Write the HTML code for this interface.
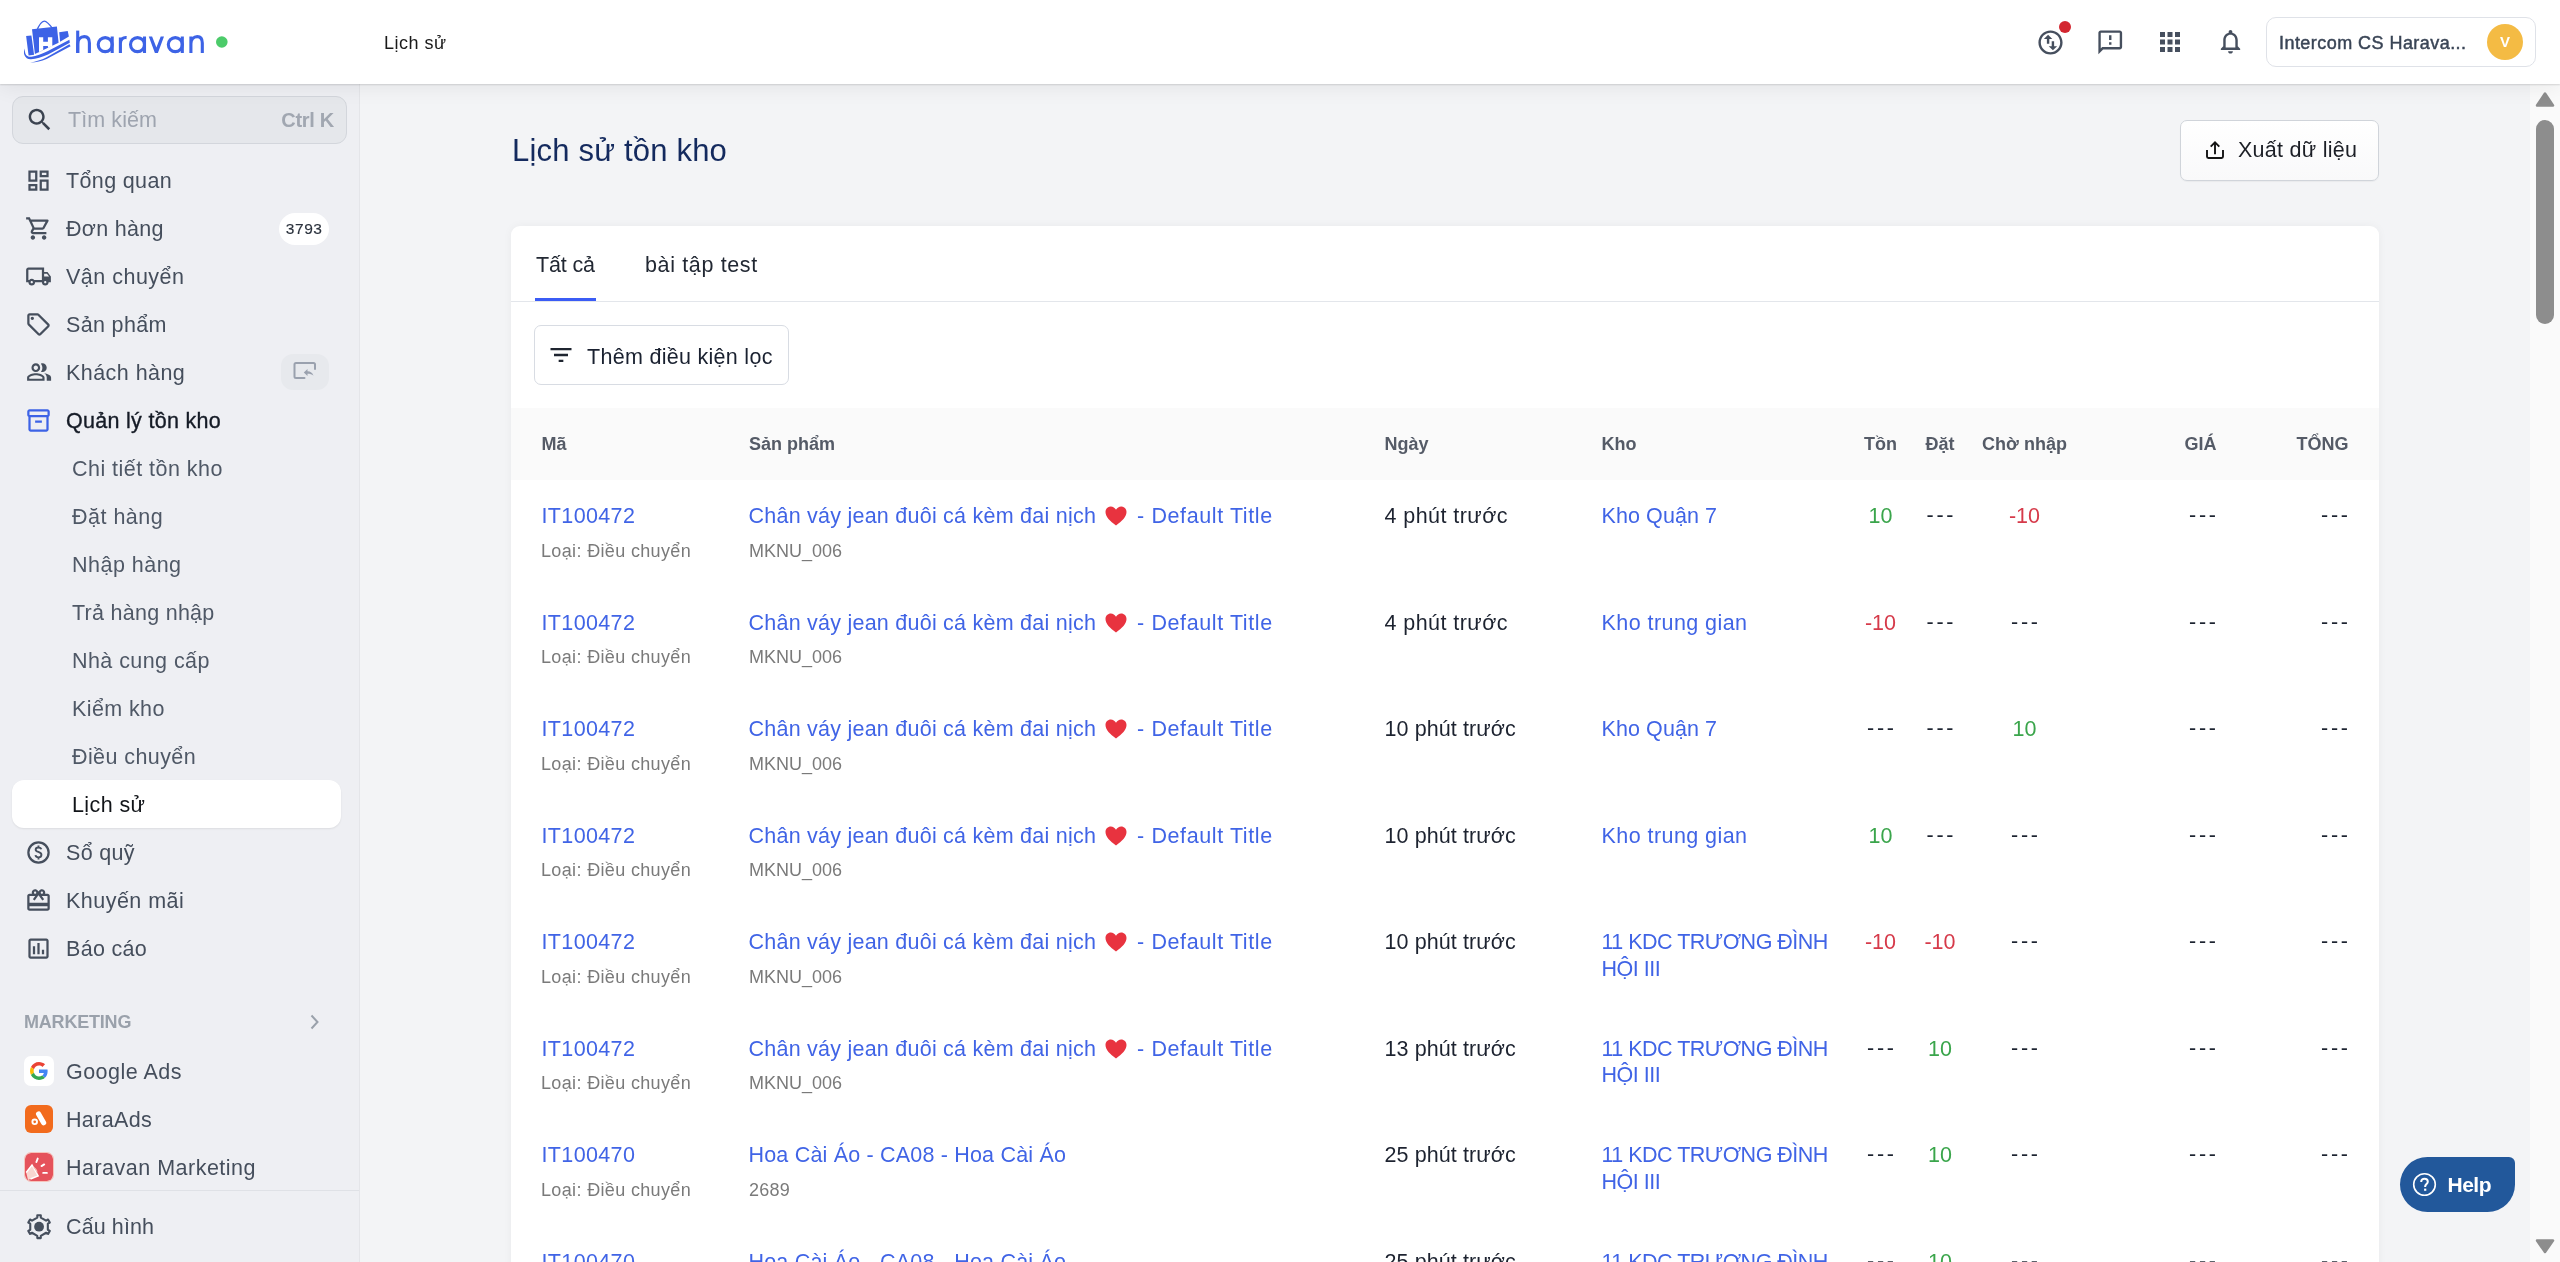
<!DOCTYPE html>
<html><head><meta charset="utf-8"><title>Lịch sử tồn kho</title>
<style>
*{box-sizing:border-box;margin:0;padding:0}
html,body{width:2560px;height:1262px;overflow:hidden;background:#f3f4f6;font-family:"Liberation Sans",sans-serif;position:relative}
.a{position:absolute;white-space:nowrap}
svg.a{overflow:visible}
#root{position:absolute;left:0;top:0;width:2560px;height:1262px;overflow:hidden;will-change:transform}</style></head><body><div id="root">
<div class="a" style="left:512px;top:128.36px;height:46px;line-height:46px;font-size:31px;color:#142a5e;letter-spacing:0.2px">Lịch sử tồn kho</div>
<div class="a" style="left:2180px;top:120px;width:199px;height:61px;border:1px solid #d0d4da;border-radius:7px;background:linear-gradient(#fff,#f9f9fa);box-shadow:0 1px 1px rgba(0,0,0,0.04)"></div>
<svg class="a" style="left:2200px;top:135px" width="30" height="30" viewBox="0 0 30 30"><g fill="none" stroke="#141414" stroke-width="1.9" stroke-linecap="butt"><path d="M15 7.2 V19.3"/><path d="M10.7 11.6 L15 7.3 L19.3 11.6"/><path d="M7 15 V21.6 Q7 23 8.4 23 H21.6 Q23 23 23 21.6 V15"/></g></svg>
<div class="a" style="left:2238px;top:132.75px;height:34px;line-height:34px;font-size:21.5px;color:#1c1f26;letter-spacing:0.27px">Xuất dữ liệu</div>
<div class="a" style="left:511px;top:226px;width:1868px;height:1100px;background:#fff;border-radius:9px;box-shadow:0 0 10px rgba(0,0,0,0.045)"></div>
<div class="a" style="left:536px;top:247.55px;height:34px;line-height:34px;font-size:21.5px;color:#222833;letter-spacing:-0.16px">Tất cả</div>
<div class="a" style="left:645px;top:247.55px;height:34px;line-height:34px;font-size:21.5px;color:#222833;letter-spacing:0.64px">bài tập test</div>
<div class="a" style="left:511px;top:301px;width:1868px;height:1px;background:#e3e6eb"></div>
<div class="a" style="left:535px;top:298px;width:61px;height:3px;background:#3b5cf5"></div>
<div class="a" style="left:534px;top:325px;width:255px;height:60px;border:1px solid #d8dce3;border-radius:7px;background:#fff"></div>
<svg class="a" style="left:546.5px;top:341px;" width="28" height="28" viewBox="0 0 24 24"><path fill="#1f2530" d="M10 18h4v-2h-4v2zM3 6v2h18V6H3zm3 7h12v-2H6v2z"/></svg>
<div class="a" style="left:587px;top:339.55px;height:34px;line-height:34px;font-size:21.5px;color:#1a2130;letter-spacing:0.29px">Thêm điều kiện lọc</div>
<div class="a" style="left:511px;top:408px;width:1868px;height:72px;background:#fafafa"></div>
<div class="a" style="left:541.5px;top:429.71px;height:28px;line-height:28px;font-size:18px;color:#555b67;font-weight:700">Mã</div>
<div class="a" style="left:749px;top:429.71px;height:28px;line-height:28px;font-size:18px;color:#555b67;font-weight:700">Sản phẩm</div>
<div class="a" style="left:1384.5px;top:429.71px;height:28px;line-height:28px;font-size:18px;color:#555b67;font-weight:700">Ngày</div>
<div class="a" style="left:1601.5px;top:429.71px;height:28px;line-height:28px;font-size:18px;color:#555b67;font-weight:700">Kho</div>
<div class="a" style="left:1850.5px;width:60px;top:429.71px;height:28px;line-height:28px;font-size:18px;color:#555b67;text-align:center;font-weight:700">Tồn</div>
<div class="a" style="left:1910.0px;width:60px;top:429.71px;height:28px;line-height:28px;font-size:18px;color:#555b67;text-align:center;font-weight:700">Đặt</div>
<div class="a" style="left:1969.5px;width:110px;top:429.71px;height:28px;line-height:28px;font-size:18px;color:#555b67;text-align:center;font-weight:700">Chờ nhập</div>
<div class="a" style="right:343.5px;top:429.71px;height:28px;line-height:28px;font-size:18px;color:#555b67;text-align:right;font-weight:700">GIÁ</div>
<div class="a" style="right:211.5px;top:429.71px;height:28px;line-height:28px;font-size:18px;color:#555b67;text-align:right;font-weight:700">TỔNG</div>
<div class="a" style="left:541.5px;top:499.25px;height:34px;line-height:34px;font-size:21.5px;color:#4064e6;letter-spacing:0.36px">IT100472</div>
<div class="a" style="left:541px;top:536.71px;height:28px;line-height:28px;font-size:18px;color:#7a7a7a;letter-spacing:0.35px">Loại: Điều chuyển</div>
<div class="a" style="left:748.5px;top:499.25px;height:34px;line-height:34px;font-size:21.5px;color:#4064e6;letter-spacing:0.24px">Chân váy jean đuôi cá kèm đai nịch<svg style="display:inline-block;vertical-align:-3px;margin:0 10px 0 9px" width="22" height="20" viewBox="0 0 22 20"><path d="M11 19.5 C5 15 0.5 11 0.5 6 C0.5 2.8 2.9 0.5 5.8 0.5 C8 0.5 9.9 1.8 11 3.8 C12.1 1.8 14 0.5 16.2 0.5 C19.1 0.5 21.5 2.8 21.5 6 C21.5 11 17 15 11 19.5 Z" fill="#e8333f"/></svg><span style="letter-spacing:0.6px">- Default Title</span></div>
<div class="a" style="left:749px;top:536.71px;height:28px;line-height:28px;font-size:18px;color:#7a7a7a">MKNU_006</div>
<div class="a" style="left:1384.5px;top:499.25px;height:34px;line-height:34px;font-size:21.5px;color:#1d2330;letter-spacing:0.44px">4 phút trước</div>
<div class="a" style="left:1601.5px;top:499.25px;height:34px;line-height:34px;font-size:21.5px;color:#4064e6;letter-spacing:0.09px">Kho Quận 7</div>
<div class="a" style="left:1850.5px;width:60px;top:499.25px;height:34px;line-height:34px;font-size:21.5px;color:#3aa54b;text-align:center;letter-spacing:0.04px">10</div>
<div class="a" style="left:1911.4px;width:60px;top:498.35px;height:34px;line-height:34px;font-size:21.5px;color:#1d2330;text-align:center;letter-spacing:2.8px">---</div>
<div class="a" style="left:1974.5px;width:100px;top:499.25px;height:34px;line-height:34px;font-size:21.5px;color:#d63a4a;text-align:center;letter-spacing:0.04px">-10</div>
<div class="a" style="right:341.1999999999998px;top:498.35px;height:34px;line-height:34px;font-size:21.5px;color:#1d2330;text-align:right;letter-spacing:2.8px">---</div>
<div class="a" style="right:209.19999999999982px;top:498.35px;height:34px;line-height:34px;font-size:21.5px;color:#1d2330;text-align:right;letter-spacing:2.8px">---</div>
<div class="a" style="left:541.5px;top:605.75px;height:34px;line-height:34px;font-size:21.5px;color:#4064e6;letter-spacing:0.36px">IT100472</div>
<div class="a" style="left:541px;top:643.21px;height:28px;line-height:28px;font-size:18px;color:#7a7a7a;letter-spacing:0.35px">Loại: Điều chuyển</div>
<div class="a" style="left:748.5px;top:605.75px;height:34px;line-height:34px;font-size:21.5px;color:#4064e6;letter-spacing:0.24px">Chân váy jean đuôi cá kèm đai nịch<svg style="display:inline-block;vertical-align:-3px;margin:0 10px 0 9px" width="22" height="20" viewBox="0 0 22 20"><path d="M11 19.5 C5 15 0.5 11 0.5 6 C0.5 2.8 2.9 0.5 5.8 0.5 C8 0.5 9.9 1.8 11 3.8 C12.1 1.8 14 0.5 16.2 0.5 C19.1 0.5 21.5 2.8 21.5 6 C21.5 11 17 15 11 19.5 Z" fill="#e8333f"/></svg><span style="letter-spacing:0.6px">- Default Title</span></div>
<div class="a" style="left:749px;top:643.21px;height:28px;line-height:28px;font-size:18px;color:#7a7a7a">MKNU_006</div>
<div class="a" style="left:1384.5px;top:605.75px;height:34px;line-height:34px;font-size:21.5px;color:#1d2330;letter-spacing:0.44px">4 phút trước</div>
<div class="a" style="left:1601.5px;top:605.75px;height:34px;line-height:34px;font-size:21.5px;color:#4064e6;letter-spacing:0.44px">Kho trung gian</div>
<div class="a" style="left:1850.5px;width:60px;top:605.75px;height:34px;line-height:34px;font-size:21.5px;color:#d63a4a;text-align:center;letter-spacing:0.04px">-10</div>
<div class="a" style="left:1911.4px;width:60px;top:604.85px;height:34px;line-height:34px;font-size:21.5px;color:#1d2330;text-align:center;letter-spacing:2.8px">---</div>
<div class="a" style="left:1975.9px;width:100px;top:604.85px;height:34px;line-height:34px;font-size:21.5px;color:#1d2330;text-align:center;letter-spacing:2.8px">---</div>
<div class="a" style="right:341.1999999999998px;top:604.85px;height:34px;line-height:34px;font-size:21.5px;color:#1d2330;text-align:right;letter-spacing:2.8px">---</div>
<div class="a" style="right:209.19999999999982px;top:604.85px;height:34px;line-height:34px;font-size:21.5px;color:#1d2330;text-align:right;letter-spacing:2.8px">---</div>
<div class="a" style="left:541.5px;top:712.25px;height:34px;line-height:34px;font-size:21.5px;color:#4064e6;letter-spacing:0.36px">IT100472</div>
<div class="a" style="left:541px;top:749.71px;height:28px;line-height:28px;font-size:18px;color:#7a7a7a;letter-spacing:0.35px">Loại: Điều chuyển</div>
<div class="a" style="left:748.5px;top:712.25px;height:34px;line-height:34px;font-size:21.5px;color:#4064e6;letter-spacing:0.24px">Chân váy jean đuôi cá kèm đai nịch<svg style="display:inline-block;vertical-align:-3px;margin:0 10px 0 9px" width="22" height="20" viewBox="0 0 22 20"><path d="M11 19.5 C5 15 0.5 11 0.5 6 C0.5 2.8 2.9 0.5 5.8 0.5 C8 0.5 9.9 1.8 11 3.8 C12.1 1.8 14 0.5 16.2 0.5 C19.1 0.5 21.5 2.8 21.5 6 C21.5 11 17 15 11 19.5 Z" fill="#e8333f"/></svg><span style="letter-spacing:0.6px">- Default Title</span></div>
<div class="a" style="left:749px;top:749.71px;height:28px;line-height:28px;font-size:18px;color:#7a7a7a">MKNU_006</div>
<div class="a" style="left:1384.5px;top:712.25px;height:34px;line-height:34px;font-size:21.5px;color:#1d2330;letter-spacing:0.09px">10 phút trước</div>
<div class="a" style="left:1601.5px;top:712.25px;height:34px;line-height:34px;font-size:21.5px;color:#4064e6;letter-spacing:0.09px">Kho Quận 7</div>
<div class="a" style="left:1851.9px;width:60px;top:711.35px;height:34px;line-height:34px;font-size:21.5px;color:#1d2330;text-align:center;letter-spacing:2.8px">---</div>
<div class="a" style="left:1911.4px;width:60px;top:711.35px;height:34px;line-height:34px;font-size:21.5px;color:#1d2330;text-align:center;letter-spacing:2.8px">---</div>
<div class="a" style="left:1974.5px;width:100px;top:712.25px;height:34px;line-height:34px;font-size:21.5px;color:#3aa54b;text-align:center;letter-spacing:0.04px">10</div>
<div class="a" style="right:341.1999999999998px;top:711.35px;height:34px;line-height:34px;font-size:21.5px;color:#1d2330;text-align:right;letter-spacing:2.8px">---</div>
<div class="a" style="right:209.19999999999982px;top:711.35px;height:34px;line-height:34px;font-size:21.5px;color:#1d2330;text-align:right;letter-spacing:2.8px">---</div>
<div class="a" style="left:541.5px;top:818.75px;height:34px;line-height:34px;font-size:21.5px;color:#4064e6;letter-spacing:0.36px">IT100472</div>
<div class="a" style="left:541px;top:856.21px;height:28px;line-height:28px;font-size:18px;color:#7a7a7a;letter-spacing:0.35px">Loại: Điều chuyển</div>
<div class="a" style="left:748.5px;top:818.75px;height:34px;line-height:34px;font-size:21.5px;color:#4064e6;letter-spacing:0.24px">Chân váy jean đuôi cá kèm đai nịch<svg style="display:inline-block;vertical-align:-3px;margin:0 10px 0 9px" width="22" height="20" viewBox="0 0 22 20"><path d="M11 19.5 C5 15 0.5 11 0.5 6 C0.5 2.8 2.9 0.5 5.8 0.5 C8 0.5 9.9 1.8 11 3.8 C12.1 1.8 14 0.5 16.2 0.5 C19.1 0.5 21.5 2.8 21.5 6 C21.5 11 17 15 11 19.5 Z" fill="#e8333f"/></svg><span style="letter-spacing:0.6px">- Default Title</span></div>
<div class="a" style="left:749px;top:856.21px;height:28px;line-height:28px;font-size:18px;color:#7a7a7a">MKNU_006</div>
<div class="a" style="left:1384.5px;top:818.75px;height:34px;line-height:34px;font-size:21.5px;color:#1d2330;letter-spacing:0.09px">10 phút trước</div>
<div class="a" style="left:1601.5px;top:818.75px;height:34px;line-height:34px;font-size:21.5px;color:#4064e6;letter-spacing:0.44px">Kho trung gian</div>
<div class="a" style="left:1850.5px;width:60px;top:818.75px;height:34px;line-height:34px;font-size:21.5px;color:#3aa54b;text-align:center;letter-spacing:0.04px">10</div>
<div class="a" style="left:1911.4px;width:60px;top:817.85px;height:34px;line-height:34px;font-size:21.5px;color:#1d2330;text-align:center;letter-spacing:2.8px">---</div>
<div class="a" style="left:1975.9px;width:100px;top:817.85px;height:34px;line-height:34px;font-size:21.5px;color:#1d2330;text-align:center;letter-spacing:2.8px">---</div>
<div class="a" style="right:341.1999999999998px;top:817.85px;height:34px;line-height:34px;font-size:21.5px;color:#1d2330;text-align:right;letter-spacing:2.8px">---</div>
<div class="a" style="right:209.19999999999982px;top:817.85px;height:34px;line-height:34px;font-size:21.5px;color:#1d2330;text-align:right;letter-spacing:2.8px">---</div>
<div class="a" style="left:541.5px;top:925.25px;height:34px;line-height:34px;font-size:21.5px;color:#4064e6;letter-spacing:0.36px">IT100472</div>
<div class="a" style="left:541px;top:962.71px;height:28px;line-height:28px;font-size:18px;color:#7a7a7a;letter-spacing:0.35px">Loại: Điều chuyển</div>
<div class="a" style="left:748.5px;top:925.25px;height:34px;line-height:34px;font-size:21.5px;color:#4064e6;letter-spacing:0.24px">Chân váy jean đuôi cá kèm đai nịch<svg style="display:inline-block;vertical-align:-3px;margin:0 10px 0 9px" width="22" height="20" viewBox="0 0 22 20"><path d="M11 19.5 C5 15 0.5 11 0.5 6 C0.5 2.8 2.9 0.5 5.8 0.5 C8 0.5 9.9 1.8 11 3.8 C12.1 1.8 14 0.5 16.2 0.5 C19.1 0.5 21.5 2.8 21.5 6 C21.5 11 17 15 11 19.5 Z" fill="#e8333f"/></svg><span style="letter-spacing:0.6px">- Default Title</span></div>
<div class="a" style="left:749px;top:962.71px;height:28px;line-height:28px;font-size:18px;color:#7a7a7a">MKNU_006</div>
<div class="a" style="left:1384.5px;top:925.25px;height:34px;line-height:34px;font-size:21.5px;color:#1d2330;letter-spacing:0.09px">10 phút trước</div>
<div class="a" style="left:1601.5px;top:925.25px;height:34px;line-height:34px;font-size:21.5px;color:#4064e6;letter-spacing:-0.51px">11 KDC TRƯƠNG ĐÌNH</div>
<div class="a" style="left:1601.5px;top:951.85px;height:34px;line-height:34px;font-size:21.5px;color:#4064e6;letter-spacing:-0.48px">HỘI III</div>
<div class="a" style="left:1850.5px;width:60px;top:925.25px;height:34px;line-height:34px;font-size:21.5px;color:#d63a4a;text-align:center;letter-spacing:0.04px">-10</div>
<div class="a" style="left:1910.0px;width:60px;top:925.25px;height:34px;line-height:34px;font-size:21.5px;color:#d63a4a;text-align:center;letter-spacing:0.04px">-10</div>
<div class="a" style="left:1975.9px;width:100px;top:924.35px;height:34px;line-height:34px;font-size:21.5px;color:#1d2330;text-align:center;letter-spacing:2.8px">---</div>
<div class="a" style="right:341.1999999999998px;top:924.35px;height:34px;line-height:34px;font-size:21.5px;color:#1d2330;text-align:right;letter-spacing:2.8px">---</div>
<div class="a" style="right:209.19999999999982px;top:924.35px;height:34px;line-height:34px;font-size:21.5px;color:#1d2330;text-align:right;letter-spacing:2.8px">---</div>
<div class="a" style="left:541.5px;top:1031.75px;height:34px;line-height:34px;font-size:21.5px;color:#4064e6;letter-spacing:0.36px">IT100472</div>
<div class="a" style="left:541px;top:1069.21px;height:28px;line-height:28px;font-size:18px;color:#7a7a7a;letter-spacing:0.35px">Loại: Điều chuyển</div>
<div class="a" style="left:748.5px;top:1031.75px;height:34px;line-height:34px;font-size:21.5px;color:#4064e6;letter-spacing:0.24px">Chân váy jean đuôi cá kèm đai nịch<svg style="display:inline-block;vertical-align:-3px;margin:0 10px 0 9px" width="22" height="20" viewBox="0 0 22 20"><path d="M11 19.5 C5 15 0.5 11 0.5 6 C0.5 2.8 2.9 0.5 5.8 0.5 C8 0.5 9.9 1.8 11 3.8 C12.1 1.8 14 0.5 16.2 0.5 C19.1 0.5 21.5 2.8 21.5 6 C21.5 11 17 15 11 19.5 Z" fill="#e8333f"/></svg><span style="letter-spacing:0.6px">- Default Title</span></div>
<div class="a" style="left:749px;top:1069.21px;height:28px;line-height:28px;font-size:18px;color:#7a7a7a">MKNU_006</div>
<div class="a" style="left:1384.5px;top:1031.75px;height:34px;line-height:34px;font-size:21.5px;color:#1d2330;letter-spacing:0.09px">13 phút trước</div>
<div class="a" style="left:1601.5px;top:1031.75px;height:34px;line-height:34px;font-size:21.5px;color:#4064e6;letter-spacing:-0.51px">11 KDC TRƯƠNG ĐÌNH</div>
<div class="a" style="left:1601.5px;top:1058.35px;height:34px;line-height:34px;font-size:21.5px;color:#4064e6;letter-spacing:-0.48px">HỘI III</div>
<div class="a" style="left:1851.9px;width:60px;top:1030.85px;height:34px;line-height:34px;font-size:21.5px;color:#1d2330;text-align:center;letter-spacing:2.8px">---</div>
<div class="a" style="left:1910.0px;width:60px;top:1031.75px;height:34px;line-height:34px;font-size:21.5px;color:#3aa54b;text-align:center;letter-spacing:0.04px">10</div>
<div class="a" style="left:1975.9px;width:100px;top:1030.85px;height:34px;line-height:34px;font-size:21.5px;color:#1d2330;text-align:center;letter-spacing:2.8px">---</div>
<div class="a" style="right:341.1999999999998px;top:1030.85px;height:34px;line-height:34px;font-size:21.5px;color:#1d2330;text-align:right;letter-spacing:2.8px">---</div>
<div class="a" style="right:209.19999999999982px;top:1030.85px;height:34px;line-height:34px;font-size:21.5px;color:#1d2330;text-align:right;letter-spacing:2.8px">---</div>
<div class="a" style="left:541.5px;top:1138.25px;height:34px;line-height:34px;font-size:21.5px;color:#4064e6;letter-spacing:0.36px">IT100470</div>
<div class="a" style="left:541px;top:1175.71px;height:28px;line-height:28px;font-size:18px;color:#7a7a7a;letter-spacing:0.35px">Loại: Điều chuyển</div>
<div class="a" style="left:748.5px;top:1138.25px;height:34px;line-height:34px;font-size:21.5px;color:#4064e6;letter-spacing:0.19px">Hoa Cài Áo - CA08 - Hoa Cài Áo</div>
<div class="a" style="left:749px;top:1175.71px;height:28px;line-height:28px;font-size:18px;color:#7a7a7a;letter-spacing:0.2px">2689</div>
<div class="a" style="left:1384.5px;top:1138.25px;height:34px;line-height:34px;font-size:21.5px;color:#1d2330;letter-spacing:0.09px">25 phút trước</div>
<div class="a" style="left:1601.5px;top:1138.25px;height:34px;line-height:34px;font-size:21.5px;color:#4064e6;letter-spacing:-0.51px">11 KDC TRƯƠNG ĐÌNH</div>
<div class="a" style="left:1601.5px;top:1164.85px;height:34px;line-height:34px;font-size:21.5px;color:#4064e6;letter-spacing:-0.48px">HỘI III</div>
<div class="a" style="left:1851.9px;width:60px;top:1137.35px;height:34px;line-height:34px;font-size:21.5px;color:#1d2330;text-align:center;letter-spacing:2.8px">---</div>
<div class="a" style="left:1910.0px;width:60px;top:1138.25px;height:34px;line-height:34px;font-size:21.5px;color:#3aa54b;text-align:center;letter-spacing:0.04px">10</div>
<div class="a" style="left:1975.9px;width:100px;top:1137.35px;height:34px;line-height:34px;font-size:21.5px;color:#1d2330;text-align:center;letter-spacing:2.8px">---</div>
<div class="a" style="right:341.1999999999998px;top:1137.35px;height:34px;line-height:34px;font-size:21.5px;color:#1d2330;text-align:right;letter-spacing:2.8px">---</div>
<div class="a" style="right:209.19999999999982px;top:1137.35px;height:34px;line-height:34px;font-size:21.5px;color:#1d2330;text-align:right;letter-spacing:2.8px">---</div>
<div class="a" style="left:541.5px;top:1244.75px;height:34px;line-height:34px;font-size:21.5px;color:#4064e6;letter-spacing:0.36px">IT100470</div>
<div class="a" style="left:541px;top:1282.21px;height:28px;line-height:28px;font-size:18px;color:#7a7a7a;letter-spacing:0.35px">Loại: Điều chuyển</div>
<div class="a" style="left:748.5px;top:1244.75px;height:34px;line-height:34px;font-size:21.5px;color:#4064e6;letter-spacing:0.19px">Hoa Cài Áo - CA08 - Hoa Cài Áo</div>
<div class="a" style="left:749px;top:1282.21px;height:28px;line-height:28px;font-size:18px;color:#7a7a7a;letter-spacing:0.2px">2689</div>
<div class="a" style="left:1384.5px;top:1244.75px;height:34px;line-height:34px;font-size:21.5px;color:#1d2330;letter-spacing:0.09px">25 phút trước</div>
<div class="a" style="left:1601.5px;top:1244.75px;height:34px;line-height:34px;font-size:21.5px;color:#4064e6;letter-spacing:-0.51px">11 KDC TRƯƠNG ĐÌNH</div>
<div class="a" style="left:1601.5px;top:1271.35px;height:34px;line-height:34px;font-size:21.5px;color:#4064e6;letter-spacing:-0.48px">HỘI III</div>
<div class="a" style="left:1851.9px;width:60px;top:1243.85px;height:34px;line-height:34px;font-size:21.5px;color:#1d2330;text-align:center;letter-spacing:2.8px">---</div>
<div class="a" style="left:1910.0px;width:60px;top:1244.75px;height:34px;line-height:34px;font-size:21.5px;color:#3aa54b;text-align:center;letter-spacing:0.04px">10</div>
<div class="a" style="left:1975.9px;width:100px;top:1243.85px;height:34px;line-height:34px;font-size:21.5px;color:#1d2330;text-align:center;letter-spacing:2.8px">---</div>
<div class="a" style="right:341.1999999999998px;top:1243.85px;height:34px;line-height:34px;font-size:21.5px;color:#1d2330;text-align:right;letter-spacing:2.8px">---</div>
<div class="a" style="right:209.19999999999982px;top:1243.85px;height:34px;line-height:34px;font-size:21.5px;color:#1d2330;text-align:right;letter-spacing:2.8px">---</div>
<div class="a" style="left:0;top:84px;width:360px;height:1178px;background:#eeeff3;border-right:1px solid #e4e5e9"></div>
<div class="a" style="left:12px;top:96px;width:335px;height:48px;border:1px solid #d3d6dc;border-radius:11px;background:#e5e7eb"></div>
<svg class="a" style="left:25px;top:105px;" width="29.5" height="29.5" viewBox="0 0 24 24"><path fill="#3b4350" d="M15.5 14h-.79l-.28-.27C15.41 12.59 16 11.11 16 9.5 16 5.91 13.09 3 9.5 3S3 5.91 3 9.5 5.91 16 9.5 16c1.61 0 3.09-.59 4.23-1.57l.27.28v.79l5 4.99L20.49 19l-4.99-5zm-6 0C7.01 14 5 11.99 5 9.5S7.01 5 9.5 5 14 7.01 14 9.5 11.99 14 9.5 14z"/></svg>
<div class="a" style="left:68px;top:103.45px;height:34px;line-height:34px;font-size:21.5px;color:#9ea4af;letter-spacing:0.09px">Tìm kiếm</div>
<div class="a" style="right:2226px;top:104.23px;height:32px;line-height:32px;font-size:20px;color:#a1a7b1;text-align:right;font-weight:700;letter-spacing:-0.3px">Ctrl K</div>
<svg class="a" style="left:25px;top:166.5px;" width="27" height="27" viewBox="0 0 24 24"><path fill="#464f5d" d="M19 5v2h-4V5h4M9 5v6H5V5h4m10 8v6h-4v-6h4M9 17v2H5v-2h4M21 3h-8v6h8V3zM11 3H3v10h8V3zm10 8h-8v10h8V11zm-10 4H3v6h8v-6z"/></svg>
<div class="a" style="left:66px;top:164.05px;height:34px;line-height:34px;font-size:21.5px;color:#454e5c;letter-spacing:0.36px">Tổng quan</div>
<svg class="a" style="left:25px;top:214.5px;" width="27" height="27" viewBox="0 0 24 24"><path fill="#464f5d" d="M15.55 13c.75 0 1.41-.41 1.75-1.03l3.58-6.49c.37-.66-.11-1.48-.87-1.48H5.21l-.94-2H1v2h2l3.6 7.59-1.35 2.44C4.52 15.37 5.48 17 7 17h12v-2H7l1.1-2h7.45zM6.16 6h12.15l-2.76 5H8.53L6.16 6zM7 18c-1.1 0-1.99.9-1.99 2S5.9 22 7 22s2-.9 2-2-.9-2-2-2zm10 0c-1.1 0-1.99.9-1.99 2s.89 2 1.99 2 2-.9 2-2-.9-2-2-2z"/></svg>
<div class="a" style="left:66px;top:212.05px;height:34px;line-height:34px;font-size:21.5px;color:#454e5c;letter-spacing:0.29px">Đơn hàng</div>
<svg class="a" style="left:25px;top:262.5px;" width="27" height="27" viewBox="0 0 24 24"><path fill="#464f5d" d="M20 8h-3V4H3c-1.1 0-2 .9-2 2v11h2c0 1.66 1.34 3 3 3s3-1.34 3-3h6c0 1.66 1.34 3 3 3s3-1.34 3-3h2v-5l-3-4zm-.5 1.5l1.96 2.5H17V9.5h2.5zM6 18c-.55 0-1-.45-1-1s.45-1 1-1 1 .45 1 1-.45 1-1 1zm2.22-3c-.55-.61-1.330-1-2.22-1s-1.67.39-2.22 1H3V6h12v9H8.22zM18 18c-.55 0-1-.45-1-1s.45-1 1-1 1 .45 1 1-.45 1-1 1z"/></svg>
<div class="a" style="left:66px;top:260.05px;height:34px;line-height:34px;font-size:21.5px;color:#454e5c;letter-spacing:0.49px">Vận chuyển</div>
<svg class="a" style="left:25px;top:310.5px;" width="27" height="27" viewBox="0 0 24 24"><path fill="#464f5d" d="M21.41 11.41l-8.83-8.83c-.37-.37-.88-.58-1.41-.58H4c-1.1 0-2 .9-2 2v7.17c0 .53.21 1.04.59 1.41l8.83 8.83c.78.78 2.05.78 2.83 0l7.17-7.17c.78-.78.78-2.04-.01-2.83zM12.830 20L4 11.17V4h7.17L20 12.83 12.83 20zM6.5 5A1.5 1.5 0 1 0 6.5 8 1.5 1.5 0 1 0 6.5 5z"/></svg>
<div class="a" style="left:66px;top:308.05px;height:34px;line-height:34px;font-size:21.5px;color:#454e5c;letter-spacing:0.34px">Sản phẩm</div>
<svg class="a" style="left:25.9px;top:358.9px;" width="26.2" height="26.2" viewBox="0 0 24 24"><path fill="#464f5d" d="M16.67 13.13C18.04 14.06 19 15.32 19 17v3h4v-3c0-2.180-3.57-3.47-6.33-3.87zM15 12c2.21 0 4-1.79 4-4s-1.79-4-4-4c-.47 0-.91.1-1.330.24C14.5 5.27 15 6.58 15 8s-.5 2.73-1.33 3.76c.42.14.86.24 1.33.24zM9 12c2.21 0 4-1.79 4-4s-1.79-4-4-4-4 1.79-4 4 1.79 4 4 4zm0-6c1.1 0 2 .9 2 2s-.9 2-2 2-2-.9-2-2 .9-2 2-2zM9 13c-2.67 0-8 1.34-8 4v3h16v-3c0-2.66-5.33-4-8-4zm6 5H3v-.99C3.2 16.29 6.3 15 9 15s5.8 1.29 6 2v1z"/></svg>
<div class="a" style="left:66px;top:356.05px;height:34px;line-height:34px;font-size:21.5px;color:#454e5c;letter-spacing:0.45px">Khách hàng</div>
<svg class="a" style="left:25px;top:406.5px;" width="27" height="27" viewBox="0 0 24 24"><path fill="#3d63e6" d="M20 2H4c-1 0-2 .9-2 2v3.01c0 .72.43 1.34 1 1.69V20c0 1.1 1.1 2 2 2h14c.9 0 2-.9 2-2V8.7c.57-.35 1-.97 1-1.69V4c0-1.1-1-2-2-2zm-1 18H5V9h14v11zm1-13H4V4h16v3zM9 12h6v2H9z"/></svg>
<div class="a" style="left:66px;top:404.05px;height:34px;line-height:34px;font-size:21.5px;color:#151b26;letter-spacing:0.29px;-webkit-text-stroke:0.35px #151b26">Quản lý tồn kho</div>
<div class="a" style="left:279px;top:212.5px;width:50px;height:32px;border-radius:16px;background:#fff"></div>
<div class="a" style="left:279.2px;width:50px;top:216.68px;height:24px;line-height:24px;font-size:15.5px;color:#2a313c;text-align:center;letter-spacing:0.55px;-webkit-text-stroke:0.15px #2a313c">3793</div>
<div class="a" style="left:281px;top:354px;width:48px;height:36px;border-radius:12px;background:#e7e9ed"></div>
<svg class="a" style="left:281px;top:354px" width="48" height="36" viewBox="0 0 48 36"><path d="M23.5 24 H15 Q13.5 24 13.5 22.5 V10.5 Q13.5 9 15 9 H32.5 Q34 9 34 10.5 V15" fill="none" stroke="#9aa1ae" stroke-width="2" stroke-linecap="round"/><path d="M22.8 18.5 L26.5 15 V17.2 C29.5 17.2 31.5 18.8 32.5 21.8 C31 20.3 29 19.8 26.5 19.8 V22 Z" fill="#9aa1ae"/></svg>
<div class="a" style="left:72px;top:452.05px;height:34px;line-height:34px;font-size:21.5px;color:#4f5866;letter-spacing:0.47px">Chi tiết tồn kho</div>
<div class="a" style="left:72px;top:500.05px;height:34px;line-height:34px;font-size:21.5px;color:#4f5866;letter-spacing:0.49px">Đặt hàng</div>
<div class="a" style="left:72px;top:548.05px;height:34px;line-height:34px;font-size:21.5px;color:#4f5866;letter-spacing:0.48px">Nhập hàng</div>
<div class="a" style="left:72px;top:596.05px;height:34px;line-height:34px;font-size:21.5px;color:#4f5866;letter-spacing:0.27px">Trả hàng nhập</div>
<div class="a" style="left:72px;top:644.05px;height:34px;line-height:34px;font-size:21.5px;color:#4f5866;letter-spacing:0.43px">Nhà cung cấp</div>
<div class="a" style="left:72px;top:692.05px;height:34px;line-height:34px;font-size:21.5px;color:#4f5866;letter-spacing:0.39px">Kiểm kho</div>
<div class="a" style="left:72px;top:740.05px;height:34px;line-height:34px;font-size:21.5px;color:#4f5866;letter-spacing:0.41px">Điều chuyển</div>
<div class="a" style="left:12px;top:780px;width:329px;height:48px;border-radius:12px;background:#fff;box-shadow:0 1px 2px rgba(0,0,0,0.08)"></div>
<div class="a" style="left:72px;top:788.05px;height:34px;line-height:34px;font-size:21.5px;color:#111418;letter-spacing:0.4px">Lịch sử</div>
<svg class="a" style="left:25px;top:838.5px" width="27" height="27" viewBox="0 0 24 24"><circle cx="12" cy="12" r="9" fill="none" stroke="#464f5d" stroke-width="2"/><path d="M14.6 9.2 C14.3 8.2 13.4 7.5 12 7.5 C10.5 7.5 9.5 8.3 9.5 9.5 C9.5 12 14.6 11 14.6 14 C14.6 15.3 13.5 16.3 12 16.3 C10.4 16.3 9.5 15.5 9.3 14.4 M12 5.8 V7.5 M12 16.3 V18.2" fill="none" stroke="#464f5d" stroke-width="1.7"/></svg>
<div class="a" style="left:66px;top:836.05px;height:34px;line-height:34px;font-size:21.5px;color:#454e5c;letter-spacing:0.29px">Sổ quỹ</div>
<svg class="a" style="left:25px;top:886.5px;" width="27" height="27" viewBox="0 0 24 24"><path fill="#464f5d" d="M20 6h-2.18c.11-.31.18-.65.18-1 0-1.66-1.34-3-3-3-1.05 0-1.96.54-2.5 1.35l-.5.67-.5-.68C10.96 2.54 10.05 2 9 2 7.34 2 6 3.34 6 5c0 .35.07.69.18 1H4c-1.11 0-1.99.89-1.99 2L2 19c0 1.11.89 2 2 2h16c1.11 0 2-.89 2-2V8c0-1.11-.89-2-2-2zm-5-2c.55 0 1 .45 1 1s-.45 1-1 1-1-.45-1-1 .45-1 1-1zM9 4c.55 0 1 .45 1 1s-.45 1-1 1-1-.45-1-1 .45-1 1-1zm11 15H4v-2h16v2zm0-5H4V8h5.08L7 10.83 8.62 12 11 8.76l1-1.36 1 1.36L15.38 12 17 10.83 14.92 8H20v6z"/></svg>
<div class="a" style="left:66px;top:884.05px;height:34px;line-height:34px;font-size:21.5px;color:#454e5c;letter-spacing:0.47px">Khuyến mãi</div>
<svg class="a" style="left:25px;top:934.5px;" width="27" height="27" viewBox="0 0 24 24"><path fill="#464f5d" d="M9 17H7v-7h2v7zm4 0h-2V7h2v10zm4 0h-2v-4h2v4zm2 2H5V5h14v14zm0-16H5c-1.1 0-2 .9-2 2v14c0 1.1.9 2 2 2h14c1.1 0 2-.9 2-2V5c0-1.1-.9-2-2-2z"/></svg>
<div class="a" style="left:66px;top:932.05px;height:34px;line-height:34px;font-size:21.5px;color:#454e5c;letter-spacing:0.32px">Báo cáo</div>
<div class="a" style="left:24px;top:1007.81px;height:28px;line-height:28px;font-size:18px;color:#9aa1ab;font-weight:700;letter-spacing:-0.2px">MARKETING</div>
<svg class="a" style="left:305px;top:1012px" width="20" height="20" viewBox="0 0 20 20"><path d="M6.5 3.5 L12.5 10 L6.5 16.5" fill="none" stroke="#9aa1ab" stroke-width="2"/></svg>
<div class="a" style="left:24px;top:1056px;width:30px;height:30px;border-radius:7px;background:#fff"></div>
<svg class="a" style="left:30px;top:1062px" width="18" height="18" viewBox="0 0 48 48"><path fill="#EA4335" d="M24 9.5c3.54 0 6.71 1.22 9.21 3.6l6.85-6.85C35.9 2.38 30.47 0 24 0 14.62 0 6.51 5.38 2.56 13.22l7.98 6.19C12.43 13.72 17.74 9.5 24 9.5z"/><path fill="#4285F4" d="M46.98 24.55c0-1.57-.15-3.09-.38-4.55H24v9.02h12.94c-.58 2.96-2.26 5.48-4.78 7.18l7.73 6c4.51-4.18 7.09-10.36 7.09-17.65z"/><path fill="#FBBC05" d="M10.53 28.59c-.48-1.45-.76-2.99-.76-4.59s.27-3.14.76-4.59l-7.98-6.19C.92 16.46 0 20.12 0 24c0 3.88.92 7.54 2.56 10.78l7.97-6.19z"/><path fill="#34A853" d="M24 48c6.48 0 11.93-2.13 15.89-5.81l-7.73-6c-2.15 1.45-4.92 2.3-8.16 2.3-6.26 0-11.57-4.22-13.47-9.91l-7.98 6.19C6.51 42.62 14.62 48 24 48z"/></svg>
<div class="a" style="left:66px;top:1055.05px;height:34px;line-height:34px;font-size:21.5px;color:#454e5c;letter-spacing:0.47px">Google Ads</div>
<div class="a" style="left:25px;top:1105px;width:28px;height:28px;border-radius:6px;background:#f26b1d"></div>
<svg class="a" style="left:25px;top:1105px" width="28" height="28" viewBox="0 0 28 28"><path d="M13.6 9 L18.6 17.8" stroke="#fff" stroke-width="5.2" stroke-linecap="round"/><circle cx="9.7" cy="16.8" r="2.3" fill="none" stroke="#fff" stroke-width="1.9"/></svg>
<div class="a" style="left:66px;top:1103.05px;height:34px;line-height:34px;font-size:21.5px;color:#454e5c;letter-spacing:0.34px">HaraAds</div>
<div class="a" style="left:24px;top:1152px;width:30px;height:30px;border-radius:7px;background:#e5525b;background-clip:padding-box;border:1.8px solid #f6c3bb"></div>
<svg class="a" style="left:24px;top:1152px" width="30" height="30" viewBox="0 0 30 30"><path d="M2.2 20.5 L8 13 L14.2 24 L6.5 27 L4 28 Z" fill="#f8d6d0"/><path d="M2.2 20.5 L8 13 L14.2 24 L6.5 27" fill="none" stroke="#fff" stroke-width="1.4"/><path d="M9.6 15.5 C11.5 16.5 12.8 18.5 13 20.5" fill="none" stroke="#f6c3bb" stroke-width="1.2"/><path d="M13.7 6.6 L12.4 10 M20.2 12.4 L17.5 14.1 M19.2 20.9 L22.9 20.9" stroke="#fff" stroke-width="1.9" stroke-linecap="round"/></svg>
<div class="a" style="left:66px;top:1151.05px;height:34px;line-height:34px;font-size:21.5px;color:#454e5c;letter-spacing:0.49px">Haravan Marketing</div>
<div class="a" style="left:0;top:1190px;width:359px;height:1px;background:#dfe1e6"></div>
<svg class="a" style="left:20px;top:1206px" width="40" height="40" viewBox="0 0 40 40"><path d="M20.80 11.57 L20.80 9.28 L17.30 9.28 L17.30 11.57 L12.01 14.62 L10.04 13.48 L8.29 16.51 L10.26 17.65 L10.26 23.75 L8.29 24.89 L10.04 27.92 L12.01 26.78 L17.30 29.83 L17.30 32.12 L20.80 32.12 L20.80 29.83 L26.09 26.78 L28.06 27.92 L29.81 24.89 L27.84 23.75 L27.84 17.65 L29.81 16.51 L28.06 13.48 L26.09 14.62 Z" fill="none" stroke="#464f5d" stroke-width="2.1" stroke-linejoin="round"/><circle cx="19.05" cy="20.70" r="4.9" fill="#464f5d"/></svg>
<div class="a" style="left:66px;top:1210.05px;height:34px;line-height:34px;font-size:21.5px;color:#454e5c;letter-spacing:0.11px">Cấu hình</div>
<div class="a" style="left:0;top:0;width:2560px;height:84px;background:#fff;box-shadow:0 1px 1.5px rgba(0,0,0,0.13),0 3px 20px rgba(0,0,0,0.07);z-index:5"></div>
<svg class="a" style="left:0;top:0;z-index:6" width="260" height="84" viewBox="0 0 260 84">
<g fill="#3d63e6">
<path d="M26.1 36.1 L31.4 35.5 L34.1 54.7 L28.6 55.6 Z"/>
<path d="M32 29.2 L56.9 26.6 L58.6 42.8 L34.9 54.1 Z M39 37.2 V52.15 L43.2 50.15 V46.1 H47.9 V47.9 L52.3 45.8 V37.2 H47.9 V41.8 H43.2 V37.2 Z"/>
<path d="M59.2 32.3 L67.7 31.1 L68.9 36.6 L60.1 41.8 Z"/>
<path d="M24.9 48.4 C24 51 23.6 53 24.4 55 C25.5 58 28 59.4 31 59.2 C36 59 42 57 48 54.5 L69.8 42.7 L69.4 39.7 L48 51 C42 54 36 56.3 31.5 56.8 C28.5 57.1 26.5 56 25.6 54 C25 52.5 24.9 50.5 24.9 48.4 Z"/>
<path d="M30.3 62.5 C36 62.6 41 61.2 46.6 59.1 L70.6 46.3 L69.4 44.2 L46.6 57.2 C41 60 36 61.6 30.3 62.5 Z"/>
</g>
<path d="M36.3 31.7 C39 25 41.5 21.2 44.3 21.2 C47 21.2 50 25 53.5 29.6" fill="none" stroke="#3d63e6" stroke-width="1.3"/>
<g fill="none" stroke="#3d63e6" stroke-width="3.1">
<path d="M77.7 30.6 V53"/>
<path d="M77.7 53 V44 C77.7 39.5 80.5 36.6 84.3 36.6 C88 36.6 89.4 39.5 89.4 43 V53"/>
<circle cx="105.2" cy="44.6" r="7"/>
<path d="M112.2 36.5 V53"/>
<path d="M120.4 53 V37.5 M120.4 43.5 C120.4 39 123 37.3 126.6 37.6"/>
<circle cx="137.5" cy="44.6" r="7"/>
<path d="M144.5 36.5 V53"/>

<circle cx="175.3" cy="44.6" r="7"/>
<path d="M182.3 36.5 V53"/>
<path d="M190.9 36.5 V53 M190.9 44 C190.9 39.5 193.7 36.6 197.3 36.6 C201 36.6 202.3 39.5 202.3 43 V53"/>
</g>
<path d="M148.8 36.6 H152.1 L156.4 47.6 L160.7 36.6 H164 L157.9 53 H154.9 Z" fill="#3d63e6"/>
<circle cx="221.8" cy="42" r="5.8" fill="#4ccb6a"/>
</svg>
<div class="a" style="left:384px;top:29.11px;height:28px;line-height:28px;font-size:18px;color:#1a1a1a;letter-spacing:0.5px;z-index:6">Lịch sử</div>
<svg class="a" style="left:2035.5px;top:27.5px;z-index:6" width="29" height="29" viewBox="0 0 24 24"><path fill="#464f5e" d="M12 2C6.48 2 2 6.48 2 12s4.48 10 10 10 10-4.48 10-10S17.52 2 12 2zm0 18c-4.41 0-8-3.59-8-8s3.59-8 8-8 8 3.59 8 8-3.59 8-8 8zM6.5 9L10 5.5 13.5 9H11v4H9V9H6.5zm11 6L14 18.5 10.5 15H13v-4h2v4h2.5z"/></svg>
<div class="a" style="left:2059px;top:21px;width:12px;height:12px;border-radius:50%;background:#d32630;z-index:6"></div>
<svg class="a" style="left:2096px;top:27.5px;z-index:6" width="28.5" height="28.5" viewBox="0 0 24 24"><path fill="#464f5e" d="M20 2H4c-1.1 0-1.99.9-1.99 2L2 22l4-4h14c1.1 0 2-.9 2-2V4c0-1.1-.9-2-2-2zm0 14H5.17l-.59.59-.58.58V4h16v12zm-9-4h2v2h-2zm0-6h2v4h-2z"/></svg>
<svg class="a" style="left:2155px;top:27px;z-index:6" width="30" height="30" viewBox="0 0 24 24"><path fill="#464f5e" d="M4 8h4V4H4v4zm6 12h4v-4h-4v4zm-6 0h4v-4H4v4zm0-6h4v-4H4v4zm6 0h4v-4h-4v4zm6-10v4h4V4h-4zm-6 4h4V4h-4v4zm6 6h4v-4h-4v4zm0 6h4v-4h-4v4z"/></svg>
<svg class="a" style="left:2215.5px;top:27px;z-index:6" width="29" height="29" viewBox="0 0 24 24"><path fill="#464f5e" d="M12 22c1.1 0 2-.9 2-2h-4c0 1.1.89 2 2 2zm6-6v-5c0-3.07-1.64-5.64-4.5-6.32V4c0-.83-.67-1.5-1.5-1.5s-1.5.67-1.5 1.5v.68C7.63 5.36 6 7.92 6 11v5l-2 2v1h16v-1l-2-2zm-2 1H8v-6c0-2.48 1.51-4.5 4-4.5s4 2.02 4 4.5v6z"/></svg>
<div class="a" style="left:2266px;top:17px;width:270px;height:50px;border:1.5px solid #dfe2e8;border-radius:10px;background:#fff;z-index:6"></div>
<div class="a" style="left:2279px;top:28.71px;height:28px;line-height:28px;font-size:18px;color:#3a4556;letter-spacing:0.45px;z-index:7;-webkit-text-stroke:0.45px #3a4556">Intercom CS Harava...</div>
<div class="a" style="left:2487px;top:24px;width:36px;height:36px;border-radius:50%;background:#f4bb44;z-index:7;color:#fff;font-weight:700;font-size:15px;line-height:36px;text-align:center">V</div>
<div class="a" style="left:2530px;top:84px;width:30px;height:1178px;background:#fafafa;z-index:4"></div>
<svg class="a" style="left:2530px;top:84px;z-index:4" width="30" height="30" viewBox="0 0 30 30"><path d="M7 21.5 L15 9.5 L23 21.5 Z" fill="#8d8d8d" stroke="#8d8d8d" stroke-width="2.5" stroke-linejoin="round"/></svg>
<div class="a" style="left:2536px;top:120px;width:18px;height:204px;border-radius:9px;background:#8d8d8d;z-index:4"></div>
<svg class="a" style="left:2530px;top:1231px;z-index:4" width="30" height="30" viewBox="0 0 30 30"><path d="M7 9.5 L15 21 L23 9.5 Z" fill="#8d8d8d" stroke="#8d8d8d" stroke-width="2.5" stroke-linejoin="round"/></svg>
<div class="a" style="left:2400px;top:1157px;width:115px;height:55px;border-radius:27.5px 6px 27.5px 27.5px;background:#22589b;z-index:8"></div>
<svg class="a" style="left:2412px;top:1172px;z-index:9" width="25" height="25" viewBox="0 0 25 25"><circle cx="12.5" cy="12.5" r="10.8" fill="none" stroke="#fff" stroke-width="1.6"/><path d="M9.2 10 C9.2 7.9 10.6 6.8 12.5 6.8 C14.4 6.8 15.8 7.9 15.8 9.7 C15.8 11.8 13.2 12.1 13.2 14.3 V15" fill="none" stroke="#fff" stroke-width="2"/><rect x="12.1" y="16.6" width="2.2" height="2.2" fill="#fff"/></svg>
<div class="a" style="left:2447.5px;top:1168.24px;height:33px;line-height:33px;font-size:21px;color:#fff;font-weight:700;letter-spacing:-0.5px;z-index:9">Help</div>
</div></body></html>
